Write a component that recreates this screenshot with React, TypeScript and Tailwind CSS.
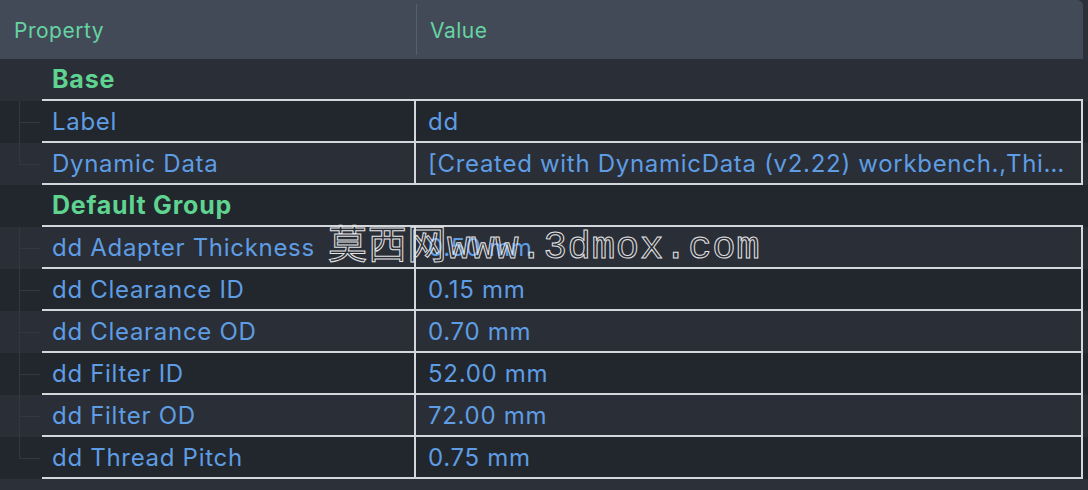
type Row =
  | { kind: "group"; title: string }
  | { kind: "prop"; name: string; value: string };

const rows: Row[] = [
  { kind: "group", title: "Base" },
  { kind: "prop", name: "Label", value: "dd" },
  { kind: "prop", name: "Dynamic Data", value: "[Created with DynamicData (v2.22) workbench.,This is a test document.]" },
  { kind: "group", title: "Default Group" },
  { kind: "prop", name: "dd Adapter Thickness", value: "0.50 mm" },
  { kind: "prop", name: "dd Clearance ID", value: "0.15 mm" },
  { kind: "prop", name: "dd Clearance OD", value: "0.70 mm" },
  { kind: "prop", name: "dd Filter ID", value: "52.00 mm" },
  { kind: "prop", name: "dd Filter OD", value: "72.00 mm" },
  { kind: "prop", name: "dd Thread Pitch", value: "0.75 mm" },
];

const Gutter = ({ last }: { last: boolean }) => (
  <div className="relative w-[42px] shrink-0">
    <div className={`absolute left-[19px] top-0 w-px bg-[#323741] ${last ? "h-[21px]" : "h-full"}`} />
    <div className="absolute left-[19px] top-[21px] h-px w-[21px] bg-[#323741]" />
  </div>
);

export default function App() {
  return (
    <div
      className="relative w-[1088px] h-[490px] overflow-hidden bg-[#2c3039] text-[24px] tracking-[0.7px]"
      style={{ fontFamily: "Inter, 'Noto Sans', sans-serif" }}
    >
      <div className="flex h-[59px] w-[1083px] rounded-tr-[6px] bg-[#434a57] text-[21px] tracking-[0.5px] text-[#66d3a3]">
        <div className="flex w-[416px] items-center pl-[14px] pt-[3px]">Property</div>
        <div className="my-[4px] w-px bg-[#565e6b]" />
        <div className="flex flex-1 items-center pl-[13px] pt-[3px]">Value</div>
      </div>

      <div className="flex flex-col">
        {rows.map((row, i) => {
          const bg = i % 2 === 1 ? "bg-[#22262d]" : "bg-[#2a2e37]";
          if (row.kind === "group") {
            return (
              <div key={i} className={`flex h-[42px] ${bg}`}>
                <div className="w-[42px] shrink-0" />
                <div className="flex w-[1041px] items-center border-b-2 border-[#d3d6da] pl-[10px] pt-[2px] text-[25px] font-bold tracking-[0.8px] text-[#5fd390]">
                  {row.title}
                </div>
              </div>
            );
          }
          const last = i === rows.length - 1 || rows[i + 1].kind === "group";
          return (
            <div key={i} className={`flex h-[42px] ${bg}`}>
              <Gutter last={last} />
              <div className="flex w-[1041px] border-b-2 border-[#d3d6da] text-[#5e9de3]">
                <div className="flex w-[374px] shrink-0 items-center border-r-2 border-[#d3d6da] pl-[10px] pt-[2px]">
                  {row.name}
                </div>
                <div className="flex min-w-0 flex-1 items-center border-r-2 border-[#d3d6da] pl-[12px] pr-[10px] pt-[2px]">
                  <span className="truncate">{row.value}</span>
                </div>
              </div>
            </div>
          );
        })}
      </div>

      <div
        className="pointer-events-none absolute left-[328px] top-[220px] text-[39px] leading-[56px] text-transparent [-webkit-text-stroke:1px_#e4e4e4]"
        style={{ fontFamily: "'Liberation Mono', 'Noto Sans CJK SC', monospace" }}
      >
        莫西网www.3dmox.com
      </div>
    </div>
  );
}
